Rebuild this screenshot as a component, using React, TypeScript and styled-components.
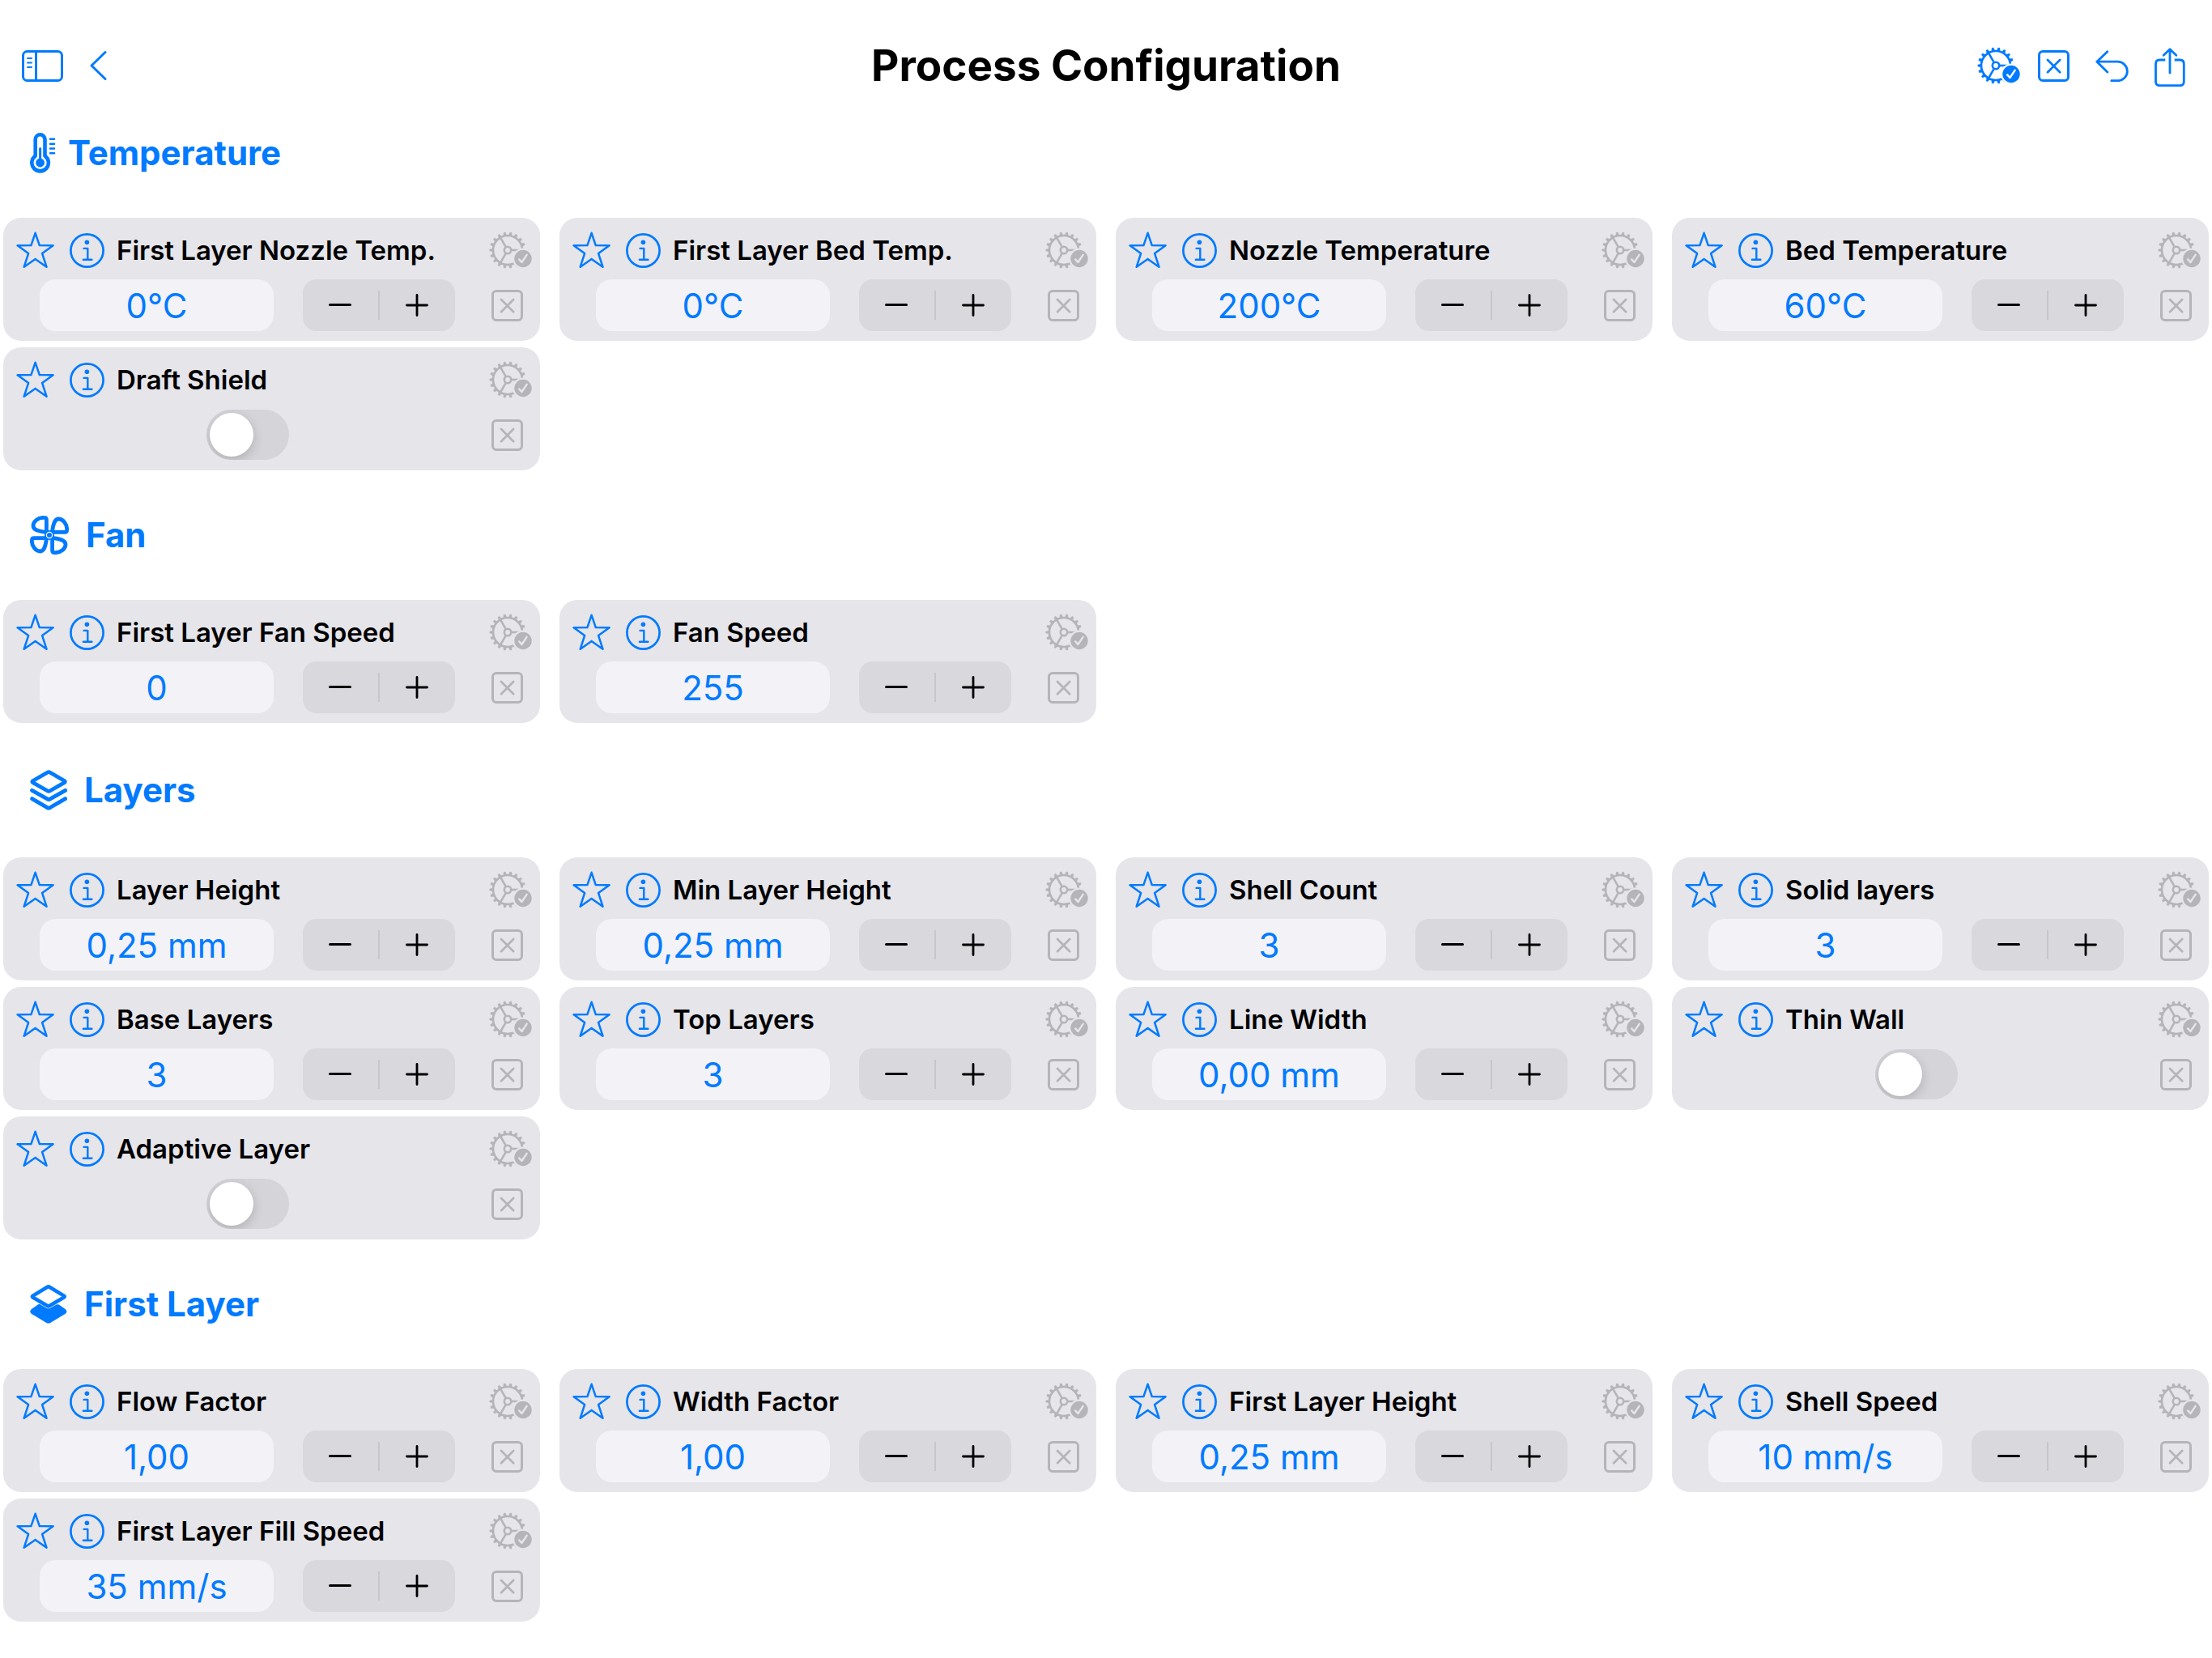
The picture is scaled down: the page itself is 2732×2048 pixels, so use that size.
import React, { useId, useState } from "react";
import styled, { createGlobalStyle } from "styled-components";

const blue = "#007aff";
const muted = "#b4b4b9";

const GlobalStyle = createGlobalStyle`
  *, *::before, *::after { box-sizing: border-box; }
  body {
    margin: 0;
    background: #ffffff;
    color: #000000;
    font-family: Inter, "Liberation Sans", sans-serif;
  }
  button, input { font: inherit; }
`;

/* ---------- icons ---------- */

const Svg = styled.svg`
  display: block;
  flex: none;
  fill: none;
  stroke: currentColor;
  stroke-width: 3;
  stroke-linecap: round;
  stroke-linejoin: round;
`;

const SidebarIcon = () => (
  <Svg width="51" height="39" viewBox="0 0 51 39">
    <rect x="1.5" y="1.5" width="48" height="36" rx="5" />
    <path d="M17.5 1.5V37.5" />
    <path strokeWidth="2" d="M7 10H12M7 15.5H12M7 21H12" />
  </Svg>
);

const BackIcon = () => (
  <Svg width="21" height="38" viewBox="0 0 21 38">
    <path d="M19 2.5L2 19L19 35.5" />
  </Svg>
);

const teeth = Array.from({ length: 18 }, (_, i) => i * 20 + 10);

const GearCheckIcon = () => {
  const id = useId();
  return (
    <Svg width="54" height="46" viewBox="0 0 54 46">
      <mask id={id} maskUnits="userSpaceOnUse" x="0" y="0" width="54" height="46">
        <rect width="54" height="46" fill="#fff" stroke="none" />
        <circle cx="42" cy="33.5" r="13" fill="#000" stroke="none" />
      </mask>
      <g mask={`url(#${id})`} strokeWidth="2.6" strokeLinecap="butt">
        <circle cx="23" cy="23" r="18" />
        <circle cx="23" cy="23" r="4.2" />
        {[0, 120, 240].map((a) => (
          <path key={a} d="M27.2 23H41" transform={`rotate(${a} 23 23)`} />
        ))}
        {teeth.map((a) => (
          <path
            key={a}
            d="M20.9 5L21.9 0.8H24.1L25.1 5Z"
            fill="currentColor"
            strokeWidth="0.4"
            transform={`rotate(${a} 23 23)`}
          />
        ))}
      </g>
      <circle cx="42" cy="33.5" r="10.7" fill="currentColor" stroke="none" />
      <path strokeWidth="2.4" stroke="var(--tick)" d="M37.2 34.4L40.4 38L46.6 28.8" />
    </Svg>
  );
};

const BoxXIcon = () => (
  <Svg width="39" height="39" viewBox="0 0 39 39">
    <rect x="1.5" y="1.5" width="36" height="36" rx="4.5" />
    <path strokeWidth="2.7" d="M12 12L27.2 27.2M27.2 12L12 27.2" />
  </Svg>
);

const UndoIcon = () => (
  <Svg width="41" height="39" viewBox="0 0 41 39">
    <path strokeWidth="2.8" d="M14.8 1.8L1.8 14.2L14.8 27M1.8 14.2H27.6A11.75 11.75 0 0 1 27.6 37.7H19.8" />
  </Svg>
);

const ShareIcon = () => (
  <Svg width="38" height="52" viewBox="0 -4 38 52">
    <path
      strokeWidth="2.8"
      strokeLinecap="butt"
      d="M13.3 15H6.4Q1.5 15 1.5 19.9V41.8Q1.5 46.7 6.4 46.7H31.4Q36.3 46.7 36.3 41.8V19.9Q36.3 15 31.4 15H24.7"
    />
    <path strokeWidth="2.8" d="M19 31V2M11.2 9.2L19 1.8L26.8 9.2" />
  </Svg>
);

const StarIcon = () => (
  <Svg width="48" height="46" viewBox="0 0 48 46">
    <path
      strokeWidth="2.5"
      d="M23.6 1.8L28.8 17.1L45.6 17.2L32.1 27.1L37.5 43.7L23.6 33.9L9.7 43.7L15.1 27.1L1.6 17.2L18.4 17.1Z"
    />
  </Svg>
);

const InfoIcon = () => (
  <Svg width="43" height="43" viewBox="0 0 43 43">
    <circle cx="21.5" cy="21.5" r="20.1" strokeWidth="2.7" />
    <circle cx="21.4" cy="11.3" r="2.8" fill="currentColor" stroke="none" />
    <path strokeWidth="2.4" d="M17.6 18.9H22.3V32.8M16.9 32.8H27.4" />
  </Svg>
);

const ThermometerIcon = () => (
  <Svg width="32" height="50" viewBox="0 0 32 50">
    <path strokeWidth="4.6" d="M6.7 8.2A5.9 5.9 0 0 1 18.5 8.2V28.6A10.3 10.3 0 1 1 6.7 28.6Z" />
    <circle cx="12.6" cy="37" r="5.4" fill="currentColor" stroke="none" />
    <path d="M12.6 19.5V36" />
    <path strokeWidth="2.6" d="M25 7.7H30M25 13.7H30M25 19.5H30M25 25.3H30" />
  </Svg>
);

const FanIcon = () => (
  <Svg width="48" height="48" viewBox="0 0 48 48">
    {[0, 90, 180, 270].map((a) => (
      <path
        key={a}
        strokeWidth="4.8"
        transform={`rotate(${a} 24 24)`}
        d="M20.4 19V5Q20.4 2.4 17.4 2.4C10 2 4 7.4 4 12.6C4 17.2 9 19 19 20.4"
      />
    ))}
    <circle cx="24" cy="24" r="6" fill="currentColor" stroke="none" />
    <circle cx="24" cy="24" r="3.6" stroke="#fff" strokeWidth="1.2" />
  </Svg>
);

const LayersIcon = () => (
  <Svg width="46" height="56" viewBox="0 -3 46 56">
    <path
      strokeWidth="4.8"
      d="M21.9 3Q23.2 2.2 24.5 3L42.6 13.5Q44.2 14.6 42.6 15.6L24.5 26Q23.2 26.8 21.9 26L3.6 15.6Q2 14.6 3.6 13.5Z"
    />
    <path strokeWidth="4.8" d="M2.6 25.3L21.9 36.2Q23.2 36.9 24.5 36.2L43.6 25.3" />
    <path strokeWidth="4.8" d="M2.6 35.6L21.9 46.8Q23.2 47.5 24.5 46.8L43.6 35.6" />
  </Svg>
);

const FirstLayerIcon = () => (
  <Svg width="46" height="48" viewBox="0 0 46 48">
    <path
      fill="currentColor"
      strokeWidth="4"
      d="M22.8 21L31 26.2H34.6L42.8 32Q44 33 42.8 34L24.2 45.2Q22.8 46 21.4 45.2L2.8 34Q1.6 33 2.8 32L11 26.2Z"
    />
    <path
      fill="#fff"
      stroke="#fff"
      strokeWidth="5.6"
      d="M8 18.4L21.5 26Q22.8 26.8 24.1 26L38 18.4L22.8 9Z"
    />
    <path
      fill="#fff"
      strokeWidth="4.6"
      d="M21.5 2.8Q22.8 2 24.1 2.8L42 13.6Q43.6 14.6 42 15.6L24.1 26Q22.8 26.8 21.5 26L3.6 15.6Q2 14.6 3.6 13.6Z"
    />
  </Svg>
);

const MinusIcon = () => (
  <Svg width="30" height="30" viewBox="0 0 30 30">
    <path d="M1.5 14.5H26.5" />
  </Svg>
);

const PlusIcon = () => (
  <Svg width="30" height="30" viewBox="0 0 30 30">
    <path strokeWidth="2.8" d="M1.5 15H26.5M14 2.5V27.5" />
  </Svg>
);

/* ---------- layout ---------- */

const Page = styled.div`
  padding-bottom: 45px;
`;

const Header = styled.header`
  display: grid;
  grid-template-columns: 1fr auto 1fr;
  align-items: center;
  height: 109px;
  padding: 53px 27px 0;
`;

const Title = styled.h1`
  margin: 0;
  font-size: 53px;
  line-height: 56px;
  font-weight: 700;
`;

const Tools = styled.div<{ $gap: number }>`
  display: flex;
  align-items: center;
  gap: ${(p) => p.$gap}px;
`;

const EndTools = styled(Tools)`
  justify-content: flex-end;
  padding-right: 6px;
`;

const IconButton = styled.button<{ $muted?: boolean }>`
  --tick: ${(p) => (p.$muted ? "#e5e5ea" : "#ffffff")};
  flex: none;
  padding: 0;
  border: 0;
  background: none;
  color: ${(p) => (p.$muted ? muted : blue)};
  cursor: pointer;
`;

const SectionTitle = styled.h2<{ $gap: number }>`
  display: flex;
  align-items: center;
  gap: ${(p) => p.$gap}px;
  margin: 0;
  padding: 55px 37px;
  color: ${blue};
  font-size: 42px;
  line-height: 50px;
  font-weight: 700;
`;

const CardGrid = styled.div`
  display: grid;
  grid-template-columns: repeat(4, minmax(0, 1fr));
  gap: 8px 24px;
  padding: 0 4px;
`;

const Card = styled.div`
  display: flex;
  flex-direction: column;
  gap: 8px;
  padding: 12px 0;
  border-radius: 22px;
  background: #e5e5ea;
`;

const CardTop = styled.div`
  display: flex;
  align-items: center;
  height: 56px;
  padding: 0 9px 0 16px;
  gap: 15px;
`;

const Marks = styled.div`
  display: flex;
  align-items: center;
  gap: 18px;
`;

const CardLabel = styled.label`
  flex: 1;
  min-width: 0;
  font-size: 33px;
  line-height: 40px;
  font-weight: 600;
  white-space: nowrap;
`;

const CardBottom = styled.div`
  display: flex;
  align-items: center;
  gap: 45px;
  height: 64px;
  padding: 0 21px 0 45px;
`;

const Control = styled.div`
  display: flex;
  flex: 1;
  align-items: center;
  justify-content: center;
  gap: 36px;
  min-width: 0;
`;

const ValueInput = styled.input`
  flex: 1;
  min-width: 0;
  height: 64px;
  padding: 0;
  border: 0;
  border-radius: 20px;
  background: #f2f2f7;
  color: ${blue};
  font-size: 42px;
  text-align: center;
`;

const Stepper = styled.div`
  display: flex;
  flex: none;
  align-items: center;
  width: 188px;
  height: 64px;
  border-radius: 17px;
  background: #d8d8dd;
`;

const StepButton = styled.button`
  display: flex;
  flex: 1;
  align-items: center;
  justify-content: center;
  height: 64px;
  padding: 0;
  border: 0;
  background: none;
  color: #000000;
  cursor: pointer;
`;

const StepDivider = styled.span`
  width: 2px;
  height: 36px;
  background: #c6c6cb;
`;

const Switch = styled.input`
  appearance: none;
  width: 102px;
  height: 62px;
  margin: 0;
  padding: 4px;
  border-radius: 31px;
  background: #d4d4d9;
  cursor: pointer;
  overflow: hidden;

  &::before {
    content: "";
    display: block;
    width: 54px;
    height: 54px;
    border-radius: 27px;
    background: #ffffff;
    box-shadow: 0 4px 14px rgba(0, 0, 0, 0.18);
  }

  &:checked {
    background: #34c759;
  }

  &:checked::before {
    margin-left: 40px;
  }
`;

/* ---------- data ---------- */

type Item = {
  label: string;
  value?: number;
  digits?: number;
  step?: number;
  unit?: string;
};

type Group = { title: string; icon: React.ReactNode; gap: number; items: Item[] };

const groups: Group[] = [
  {
    title: "Temperature",
    icon: <ThermometerIcon />,
    gap: 15,
    items: [
      { label: "First Layer Nozzle Temp.", value: 0, unit: "°C" },
      { label: "First Layer Bed Temp.", value: 0, unit: "°C" },
      { label: "Nozzle Temperature", value: 200, unit: "°C" },
      { label: "Bed Temperature", value: 60, unit: "°C" },
      { label: "Draft Shield" },
    ],
  },
  {
    title: "Fan",
    icon: <FanIcon />,
    gap: 21,
    items: [
      { label: "First Layer Fan Speed", value: 0 },
      { label: "Fan Speed", value: 255 },
    ],
  },
  {
    title: "Layers",
    icon: <LayersIcon />,
    gap: 21,
    items: [
      { label: "Layer Height", value: 0.25, digits: 2, step: 0.05, unit: " mm" },
      { label: "Min Layer Height", value: 0.25, digits: 2, step: 0.05, unit: " mm" },
      { label: "Shell Count", value: 3 },
      { label: "Solid layers", value: 3 },
      { label: "Base Layers", value: 3 },
      { label: "Top Layers", value: 3 },
      { label: "Line Width", value: 0, digits: 2, step: 0.05, unit: " mm" },
      { label: "Thin Wall" },
      { label: "Adaptive Layer" },
    ],
  },
  {
    title: "First Layer",
    icon: <FirstLayerIcon />,
    gap: 21,
    items: [
      { label: "Flow Factor", value: 1, digits: 2, step: 0.05 },
      { label: "Width Factor", value: 1, digits: 2, step: 0.05 },
      { label: "First Layer Height", value: 0.25, digits: 2, step: 0.05, unit: " mm" },
      { label: "Shell Speed", value: 10, unit: " mm/s" },
      { label: "First Layer Fill Speed", value: 35, unit: " mm/s" },
    ],
  },
];

function SettingCard({ label, value, digits = 0, step = 1, unit = "" }: Item) {
  const id = useId();
  const format = (n: number) => n.toFixed(digits).replace(".", ",") + unit;
  const [text, setText] = useState(value === undefined ? "" : format(value));
  const change = (delta: number) => {
    const current = parseFloat(text.replace(",", ".")) || 0;
    setText(format(Math.max(0, current + delta)));
  };

  return (
    <Card>
      <CardTop>
        <Marks>
          <IconButton aria-label={`Favorite ${label}`}><StarIcon /></IconButton>
          <IconButton aria-label={`About ${label}`}><InfoIcon /></IconButton>
        </Marks>
        <CardLabel htmlFor={id}>{label}</CardLabel>
        <IconButton $muted aria-label={`Apply ${label}`}><GearCheckIcon /></IconButton>
      </CardTop>
      <CardBottom>
        <Control>
          {value === undefined ? (
            <Switch id={id} type="checkbox" role="switch" />
          ) : (
            <>
              <ValueInput id={id} type="text" value={text} onChange={(e) => setText(e.target.value)} />
              <Stepper>
                <StepButton aria-label={`Decrease ${label}`} onClick={() => change(-step)}><MinusIcon /></StepButton>
                <StepDivider />
                <StepButton aria-label={`Increase ${label}`} onClick={() => change(step)}><PlusIcon /></StepButton>
              </Stepper>
            </>
          )}
        </Control>
        <IconButton $muted aria-label={`Clear ${label}`}><BoxXIcon /></IconButton>
      </CardBottom>
    </Card>
  );
}

export default function App() {
  return (
    <Page>
      <GlobalStyle />
      <Header>
        <Tools $gap={33}>
          <IconButton aria-label="Toggle sidebar"><SidebarIcon /></IconButton>
          <IconButton aria-label="Back"><BackIcon /></IconButton>
        </Tools>
        <Title>Process Configuration</Title>
        <EndTools $gap={32}>
          <Tools $gap={21}>
            <IconButton aria-label="Apply all"><GearCheckIcon /></IconButton>
            <IconButton aria-label="Clear all"><BoxXIcon /></IconButton>
          </Tools>
          <IconButton aria-label="Undo"><UndoIcon /></IconButton>
          <IconButton aria-label="Share"><ShareIcon /></IconButton>
        </EndTools>
      </Header>
      <main>
        {groups.map((g) => (
          <section key={g.title}>
            <SectionTitle $gap={g.gap}>{g.icon}{g.title}</SectionTitle>
            <CardGrid>
              {g.items.map((item) => <SettingCard key={item.label} {...item} />)}
            </CardGrid>
          </section>
        ))}
      </main>
    </Page>
  );
}
